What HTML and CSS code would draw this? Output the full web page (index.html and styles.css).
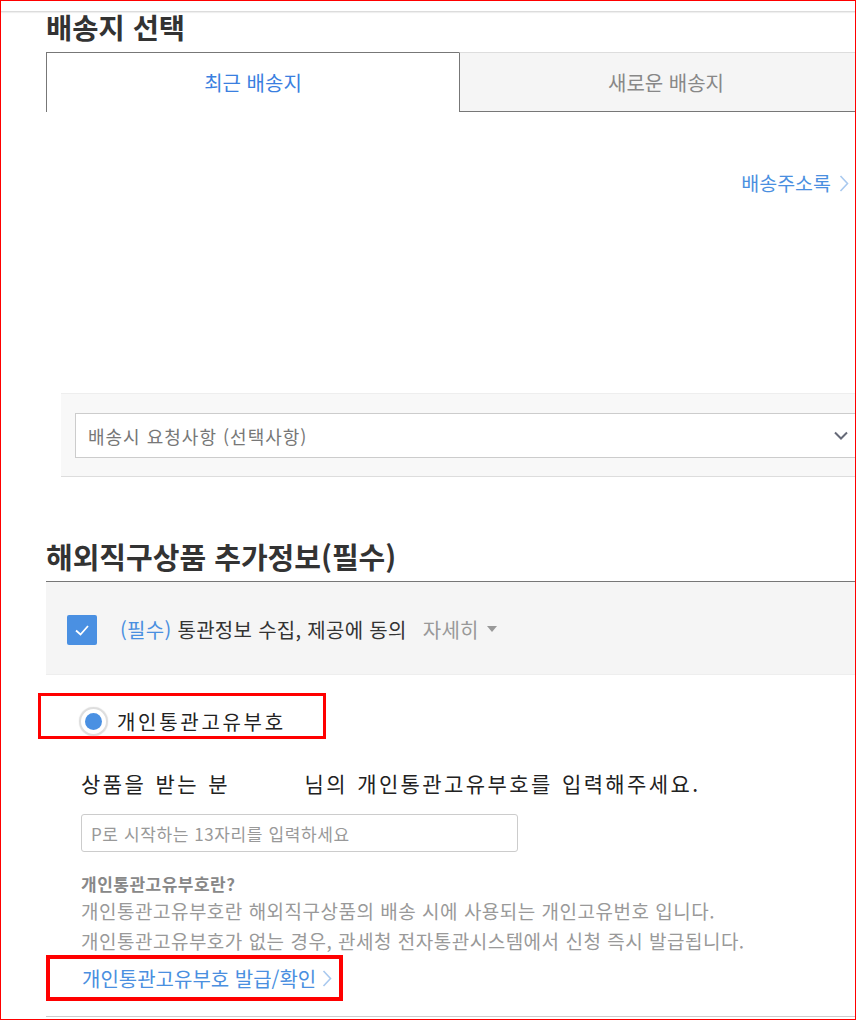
FILE: index.html
```html
<!DOCTYPE html>
<html lang="ko">
<head>
<meta charset="utf-8">
<title>배송지 선택</title>
<link rel="stylesheet" href="styles.css">
</head>
<body>
<div class="frame"></div>
<div class="topbar"></div>
<main class="page">
  <h2 class="title">배송지 선택</h2>
  <div class="tabs">
    <div class="tab tab-active">최근 배송지</div>
    <div class="tab tab-inactive">새로운 배송지</div>
  </div>
  <div class="addr-row">
    <a class="addr-link">배송주소록<svg class="chev" width="10" height="17" viewBox="0 0 10 17"><polyline points="1.5,1 8.5,8.5 1.5,16" fill="none" stroke="#a9c9ef" stroke-width="1.6"/></svg></a>
  </div>
  <div class="request-box">
    <div class="select">
      <span>배송시 요청사항 (선택사항)</span>
      <svg width="14" height="9" viewBox="0 0 14 9"><polyline points="1,1.5 7,7.5 13,1.5" fill="none" stroke="#666a78" stroke-width="2"/></svg>
    </div>
  </div>

  <h2 class="section-title">해외직구상품 추가정보(필수)</h2>
  <div class="agree">
    <span class="checkbox"><svg width="18" height="14" viewBox="0 0 18 14"><polyline points="3,7.5 7.5,11.5 15,3" fill="none" stroke="#fff" stroke-width="1.8"/></svg></span>
    <span class="agree-text"><span class="req">(필수)</span> 통관정보 수집, 제공에 동의</span>
    <span class="more">자세히<svg class="tri" width="10" height="7" viewBox="0 0 10 7"><polygon points="0,0 10,0 5,6" fill="#999"/></svg></span>
  </div>

  <div class="radio-row">
    <span class="radio"><span class="radio-dot"></span></span>
    <span class="radio-label">개인통관고유부호</span>
  </div>

  <div class="guide">
    <p class="instruction">상품을 받는 분 <span class="name-blank"></span> 님의 개인통관고유부호를 입력해주세요.</p>
    <input class="id-input" type="text" placeholder="P로 시작하는 13자리를 입력하세요">
    <p class="help-q">개인통관고유부호란?</p>
    <p class="help-desc">개인통관고유부호란 해외직구상품의 배송 시에 사용되는 개인고유번호 입니다.</p>
    <p class="help-desc">개인통관고유부호가 없는 경우, 관세청 전자통관시스템에서 신청 즉시 발급됩니다.</p>
  </div>
  <div class="link-box">
    <a class="issue-link">개인통관고유부호 발급/확인<svg class="chev" width="10" height="17" viewBox="0 0 10 17"><polyline points="1.5,1 8.5,8.5 1.5,16" fill="none" stroke="#a9c9ef" stroke-width="1.6"/></svg></a>
  </div>
  <div class="bottom-line"></div>
</main>
</body>
</html>
```
FILE: styles.css
```css
* { box-sizing: border-box; }
html, body { margin: 0; padding: 0; }
body {
  width: 856px;
  height: 1021px;
  overflow: hidden;
  background: #fff;
  color: #222;
  font-family: "Noto Sans CJK KR", "Noto Sans", sans-serif;
}
.frame {
  position: fixed;
  left: 0;
  top: 0;
  width: 856px;
  height: 1020px;
  border: 1px solid #ff0000;
  pointer-events: none;
  z-index: 10;
}
.topbar {
  height: 12px;
  border-bottom: 1px solid #dcdcdc;
  box-shadow: 0 1px 1px #efefef;
}
.page {
  margin-left: 46px;
  width: 826px;
}
.title {
  margin: 0;
  padding-bottom: 10px;
  font-size: 28.5px;
  line-height: 30px;
  font-weight: 700;
  color: #333;
}
.tabs {
  display: flex;
  height: 60px;
}
.tab {
  display: flex;
  align-items: center;
  justify-content: center;
  font-size: 20px;
  font-weight: 400;
}
.tab-active {
  flex: 0 0 413px;
  border-top: 1px solid #777;
  border-left: 1px solid #777;
  color: #3a7fe0;
}
.tab-inactive {
  flex: 1;
  background: #f5f5f5;
  border-top: 1px solid #ddd;
  border-left: 1px solid #777;
  border-bottom: 1px solid #777;
  color: #888;
}
.addr-row {
  display: flex;
  justify-content: flex-end;
  margin-top: 59px;
  padding-right: 23px;
  line-height: 24px;
}
.addr-link {
  display: flex;
  align-items: center;
  font-size: 19.5px;
  color: #4a8fe0;
}
.chev { margin-left: 8px; }
.request-box {
  margin-top: 198px;
  margin-left: 15px;
  background: #f8f8f8;
  border-top: 1px solid #eee;
  border-bottom: 1px solid #ddd;
  padding: 19px 0 18px 14px;
}
.select {
  height: 45px;
  background: #fff;
  border: 1px solid #ccc;
  display: flex;
  align-items: center;
  justify-content: space-between;
  padding: 0 23px 0 12px;
  font-size: 18px;
  letter-spacing: 1px;
  color: #777;
}
.section-title {
  margin: 64px 0 0;
  padding-bottom: 10px;
  border-bottom: 1px solid #777;
  font-size: 29px;
  line-height: 30px;
  font-weight: 700;
  color: #333;
}
.agree {
  height: 93px;
  background: #f5f5f5;
  border-bottom: 1px solid #eee;
  display: flex;
  align-items: center;
  padding: 3px 0 0 21px;
  font-size: 20px;
  letter-spacing: 0.3px;
}
.checkbox {
  width: 30px;
  height: 30px;
  background: #4a90e2;
  border-radius: 2px;
  display: flex;
  align-items: center;
  justify-content: center;
  margin-right: 23px;
}
.agree-text { color: #333; }
.req { color: #4a8fe0; }
.more {
  margin-left: 16px;
  color: #999;
  display: flex;
  align-items: center;
}
.tri { margin-left: 8px; }
.radio-row {
  margin: 18px 0 0 -8px;
  width: 288px;
  height: 46px;
  border: 3px solid #ff0000;
  display: flex;
  align-items: center;
  padding: 10px 0 0 38px;
}
.radio {
  width: 29px;
  height: 29px;
  border-radius: 50%;
  border: 2px solid #dedede;
  box-shadow: 0 0 1px #ccc;
  display: flex;
  align-items: center;
  justify-content: center;
  margin-right: 9px;
}
.radio-dot {
  width: 17px;
  height: 17px;
  border-radius: 50%;
  background: #4a90e2;
}
.radio-label {
  font-size: 20px;
  letter-spacing: 2.7px;
  color: #222;
}
.guide { padding-left: 35px; }
.instruction {
  margin: 29px 0 0;
  font-size: 21px;
  line-height: 30px;
  letter-spacing: 2.4px;
  word-spacing: 1px;
  color: #222;
}
.name-blank {
  display: inline-block;
  width: 56px;
}
.id-input {
  display: block;
  margin-top: 16px;
  width: 437px;
  height: 38px;
  border: 1px solid #ccc;
  border-radius: 3px;
  padding: 0 9px;
  font-family: "Noto Sans CJK KR", "Noto Sans", sans-serif;
  font-size: 17px;
  letter-spacing: 0.6px;
  background: #fff;
  outline: none;
}
.id-input::placeholder { color: #999; }
.help-q {
  margin: 20px 0 0;
  font-size: 17px;
  line-height: 24px;
  letter-spacing: 0.5px;
  font-weight: 700;
  color: #888;
}
.help-desc {
  margin: 0;
  font-size: 19px;
  line-height: 30px;
  letter-spacing: 0.5px;
  color: #999;
}
.link-box {
  margin-top: -1px;
  width: 297px;
  height: 46px;
  border: 4px solid #ff0000;
  display: flex;
  align-items: center;
  padding-left: 32px;
}
.issue-link {
  display: flex;
  align-items: center;
  font-size: 20px;
  color: #4a8fe0;
}
.issue-link .chev { margin-left: 6px; }
.bottom-line {
  margin-top: 15px;
  border-top: 1px solid #ccc;
}
```
